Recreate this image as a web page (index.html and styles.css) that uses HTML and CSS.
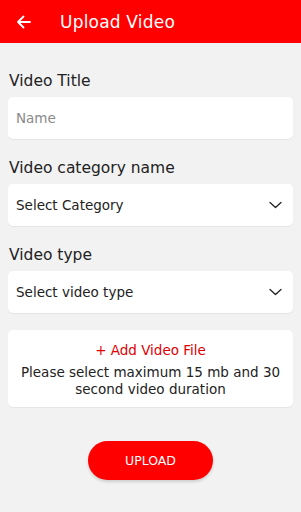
FILE: index.html
```html
<!DOCTYPE html>
<html lang="en">
  <head>
    <meta charset="UTF-8" />
    <meta name="viewport" content="width=device-width, initial-scale=1.0" />
    <title>Upload Video</title>
    <link rel="stylesheet" href="styles.css">
  </head>
  <body>
    <div class="header">
      <svg class="back" width="16" height="16" viewBox="0 0 16 16">
        <path d="M14 8H2M7.5 2.5L2 8l5.5 5.5" stroke="#fff" stroke-width="1.8" fill="none" stroke-linecap="round" stroke-linejoin="round"/>
      </svg>
      <h1>Upload Video</h1>
    </div>
    <div class="form">
      <label class="label">Video Title</label>
      <div class="field">
        <span class="placeholder">Name</span>
      </div>

      <label class="label">Video category name</label>
      <div class="field select">
        <span>Select Category</span>
        <svg width="13" height="8" viewBox="0 0 13 8">
          <path d="M1 1.5l5.5 5 5.5-5" stroke="#222" stroke-width="1.3" fill="none" stroke-linecap="round" stroke-linejoin="round"/>
        </svg>
      </div>

      <label class="label">Video type</label>
      <div class="field select">
        <span>Select video type</span>
        <svg width="13" height="8" viewBox="0 0 13 8">
          <path d="M1 1.5l5.5 5 5.5-5" stroke="#222" stroke-width="1.3" fill="none" stroke-linecap="round" stroke-linejoin="round"/>
        </svg>
      </div>

      <div class="file-box">
        <div class="add-file">+ Add Video File</div>
        <div class="hint">Please select maximum 15 mb and 30<br>second video duration</div>
      </div>

      <div class="btn-row">
        <button class="upload-btn">UPLOAD</button>
      </div>
    </div>
  </body>
</html>
```

FILE: styles.css
```css
body {
  margin: 0;
  padding: 0;
  background-color: #f2f2f2;
  font-family: "DejaVu Sans", sans-serif;
  color: #222;
  height: 512px;
  overflow: hidden;
}
.header {
  height: 43px;
  background-color: #ff0000;
  display: flex;
  align-items: center;
  padding-left: 16px;
}
.back {
  margin-right: 28px;
}
.header h1 {
  margin: 0;
  color: white;
  font-size: 17px;
  font-weight: normal;
  letter-spacing: 0.2px;
}
.form {
  padding: 0 8px;
  display: flex;
  flex-direction: column;
}
.label {
  font-size: 15.5px;
  margin-top: 20px;
  margin-bottom: 7px;
  padding-left: 1px;
}
.label:first-child {
  margin-top: 29px;
}
.field {
  background-color: white;
  border-radius: 5px;
  height: 42px;
  display: flex;
  align-items: center;
  padding: 0 8px;
  font-size: 13.5px;
  box-shadow: 0 1px 1px rgba(0, 0, 0, 0.06);
}
.placeholder {
  color: #8a8a8a;
}
.select {
  justify-content: space-between;
  padding-right: 11px;
}
.file-box {
  background-color: white;
  border-radius: 5px;
  margin-top: 17px;
  height: 77px;
  display: flex;
  flex-direction: column;
  justify-content: center;
  align-items: center;
  text-align: center;
  font-size: 13.5px;
  box-shadow: 0 1px 1px rgba(0, 0, 0, 0.06);
}
.add-file {
  color: #e00000;
  margin-top: 2px;
  margin-bottom: 6px;
}
.hint {
  line-height: 17px;
}
.btn-row {
  display: flex;
  justify-content: center;
  margin-top: 34px;
}
.upload-btn {
  width: 125px;
  height: 39px;
  border: none;
  border-radius: 20px;
  background-color: #ff0000;
  color: white;
  font-family: "DejaVu Sans", sans-serif;
  font-size: 12.5px;
  box-shadow: 0 2px 3px rgba(0, 0, 0, 0.15);
}
```
